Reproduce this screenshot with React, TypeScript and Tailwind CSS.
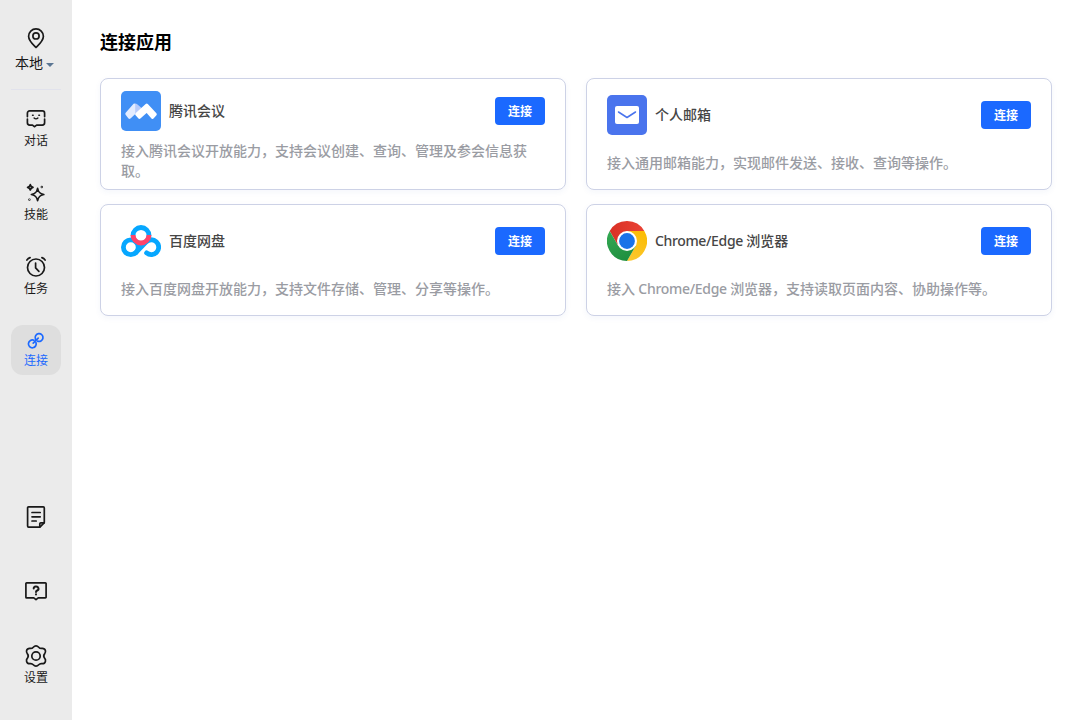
import type { ReactNode } from 'react';
import clsx from 'clsx';

interface NavItemProps {
  icon: ReactNode;
  label?: string;
  active?: boolean;
}

interface AppCardProps {
  icon: ReactNode;
  name: ReactNode;
  description: ReactNode;
  compact?: boolean;
}

const stroke = {
  fill: 'none',
  stroke: 'currentColor',
  strokeWidth: 1.7,
  strokeLinecap: 'round',
  strokeLinejoin: 'round',
} as const;

const PinIcon = () => (
  <svg width="24" height="24" viewBox="0 0 24 24" {...stroke}>
    <path d="M12 21.500C9.200 18.800 4.600 15 4.600 10.300a7.400 7.400 0 0 1 14.800 0c0 4.700-4.600 8.500-7.400 11.200Z" />
    <circle cx="12" cy="9.900" r="3.100" />
  </svg>
);

const ChatIcon = () => (
  <svg width="24" height="24" viewBox="0 0 24 24" {...stroke}>
    <path d="M3.400 9.600V6.200a2.300 2.300 0 0 1 2.300-2.300h12.600a2.300 2.300 0 0 1 2.300 2.300v3.400M3.400 12v3.800a2.300 2.300 0 0 0 2.300 2.300h2.800l1.900 1.600 2.200-1.600h5.700a2.300 2.300 0 0 0 2.300-2.300V12" />
    <path d="M8.500 8.300h.7M14.800 8.300h.7M10.100 11c1.100 1.200 2.700 1.200 3.800 0" strokeWidth="1.400" />
  </svg>
);

const SkillIcon = () => (
  <svg width="24" height="24" viewBox="0 0 24 24" {...stroke}>
    <path d="M13.600 7.300c.8 4 2.200 5.400 6.200 6.200-4 .8-5.400 2.200-6.200 6.200-.8-4-2.200-5.400-6.200-6.200 4-.8 5.400-2.200 6.200-6.200Z" />
    <path d="M6.300 3.600c.3 1.800.9 2.400 2.700 2.700-1.800.3-2.400.9-2.700 2.700-.3-1.800-.9-2.400-2.700-2.700 1.800-.3 2.400-.9 2.700-2.700Z" />
    <circle cx="17.800" cy="6" r=".35" />
    <circle cx="5.400" cy="18.600" r=".35" />
  </svg>
);

const ClockIcon = () => (
  <svg width="24" height="24" viewBox="0 0 24 24" {...stroke}>
    <circle cx="12" cy="12.500" r="8.500" />
    <path d="M11.600 8v4.900l3.300 3.500M2.900 5c.8-1.100 1.900-1.900 3.200-2.400M21.100 5c-.8-1.100-1.900-1.900-3.200-2.400" />
  </svg>
);

const LinkIcon = () => (
  <svg width="20" height="20" viewBox="0 0 20 20" {...stroke}>
    <path d="M9.500 8.100A3.900 3.900 0 1 1 11.500 10.100M9.900 11.300A3.900 3.900 0 1 1 7.900 9.300" />
    <path d="M7.200 12.200l5-5" />
  </svg>
);

const NoteIcon = () => (
  <svg width="24" height="24" viewBox="0 0 24 24" {...stroke}>
    <path d="M4.600 1.900h14.700a1 1 0 0 1 1 1v14.700l-4.400 4.500H4.600a1 1 0 0 1-1-1V2.900a1 1 0 0 1 1-1Z" />
    <path d="M20.200 17.800h-3.400a1 1 0 0 0-1 1v3M8 7.500h8.200M8 11.800h8.200M8 16h4.200" />
  </svg>
);

const HelpIcon = () => (
  <svg width="24" height="24" viewBox="0 0 24 24" {...stroke}>
    <path d="M2.600 3.900h18.800a.7.7 0 0 1 .7.700v13.600a.7.7 0 0 1-.7.700h-7.200L12 20.700l-2.200-1.800H2.600a.7.7 0 0 1-.7-.7V4.600a.7.7 0 0 1 .7-.7Z" />
    <path d="M9.700 9.600a2.400 2.100 0 1 1 3.500 1.900c-.8.4-1.200.8-1.200 1.500M12 15.300v.1" strokeWidth="2" />
  </svg>
);

const SettingsIcon = () => (
  <svg width="24" height="24" viewBox="0 0 24 24" {...stroke}>
    <path d="M9.300 3.200C10.200 2.200 11 1.900 12 1.900s1.800.3 2.700 1.300c.9 1 1.700 1.400 3 1.200 2-.2 3.200.5 3.700 2.200.4 1.400.1 2.300-.8 3.300-1.100 1.300-1.100 2.900 0 4.200.9 1 1.200 1.900.8 3.300-.5 1.700-1.700 2.400-3.700 2.200-1.300-.2-2.100.2-3 1.200s-1.700 1.300-2.700 1.300-1.800-.3-2.700-1.300c-.9-1-1.700-1.400-3-1.200-2 .2-3.200-.5-3.700-2.200-.4-1.400-.1-2.300.8-3.300 1.100-1.300 1.100-2.900 0-4.200-.9-1-1.200-1.900-.8-3.300.5-1.700 1.700-2.400 3.700-2.200 1.300.2 2.100-.2 3-1.200Z" />
    <circle cx="12" cy="12" r="4.200" />
  </svg>
);

const MeetingLogo = () => (
  <svg width="40" height="40" viewBox="0 0 40 40" strokeWidth="3" strokeLinejoin="round">
    <rect width="40" height="40" rx="5" fill="#408ff5" />
    <path d="M13.500 14L5.800 22.800 8.500 26.400 17 18.500Z" fill="#e3ecff" stroke="#e3ecff" />
    <path d="M14.200 12.400c.8 0 1.500.3 2 .8l5 4.300-7 7Z" fill="#b7cbfb" />
    <path d="M25.700 14L15.800 23.200 18.400 26.400 25.700 19.800 31.600 26.400 34.300 23.200Z" fill="#fff" stroke="#fff" />
  </svg>
);

const MailLogo = () => (
  <svg width="40" height="40" viewBox="0 0 40 40">
    <rect width="40" height="40" rx="5" fill="#4a74ed" />
    <rect x="8" y="11" width="24" height="18" rx="2" fill="#fff" />
    <path d="M11.500 17l8.500 5.500 8.500-5.500" fill="none" stroke="#4a74ed" strokeWidth="1.500" strokeLinecap="round" strokeLinejoin="round" />
  </svg>
);

const NetdiskLogo = () => (
  <svg width="40" height="40" viewBox="0 0 40 40" fill="none" strokeWidth="4.800">
    <circle cx="20" cy="14.500" r="8" stroke="#06a7ff" />
    <circle cx="9.800" cy="26.200" r="7.400" stroke="#06a7ff" />
    <path d="M14.800 31.600L25 21a7.400 7.400 0 1 1 .6 10.900" stroke="#06a7ff" strokeLinecap="round" />
    <path d="M12 14a8 8 0 1 0 16 0" stroke="#ff436a" />
  </svg>
);

const ChromeLogo = () => (
  <svg width="40" height="40" viewBox="0 0 48 48">
    <defs>
      <linearGradient id="red" x1="3.200" y1="15" x2="44.800" y2="15" gradientUnits="userSpaceOnUse">
        <stop stopColor="#d93025" />
        <stop offset="1" stopColor="#ea4335" />
      </linearGradient>
      <linearGradient id="yellow" x1="20.700" y1="47.700" x2="41.500" y2="11.600" gradientUnits="userSpaceOnUse">
        <stop stopColor="#fcc934" />
        <stop offset="1" stopColor="#fbbc04" />
      </linearGradient>
      <linearGradient id="green" x1="26.600" y1="46.500" x2="5.800" y2="10.400" gradientUnits="userSpaceOnUse">
        <stop stopColor="#1e8e3e" />
        <stop offset="1" stopColor="#34a853" />
      </linearGradient>
    </defs>
    <path d="M3.215 12A24 24 0 0 1 44.785 12H24L13.608 30Z" fill="url(#red)" />
    <path d="M44.785 12A24 24 0 0 1 24 48L34.392 30 24 12Z" fill="url(#yellow)" />
    <path d="M24 48A24 24 0 0 1 3.215 12L13.608 30H34.392Z" fill="url(#green)" />
    <circle cx="24" cy="24" r="12" fill="#fff" />
    <circle cx="24" cy="24" r="9.500" fill="#1a73e8" />
  </svg>
);

const NavItem = ({ icon, label, active }: NavItemProps) => (
  <button
    className={clsx(
      'flex h-[50px] w-[50px] flex-col items-center gap-0.5 rounded-xl text-xs leading-4',
      active ? 'bg-[#dedede] pt-1.5 text-[#1b69ff]' : 'pt-1 text-[#191919]',
    )}
  >
    {icon}
    {label && <span>{label}</span>}
  </button>
);

const AppCard = ({ icon, name, description, compact }: AppCardProps) => (
  <section
    className={clsx(
      'flex h-28 flex-col rounded-lg border border-[#cdd2e6] bg-white px-5 shadow-[0_2px_6px_rgba(30,80,180,0.05)]',
      compact ? 'gap-2.5 pt-3' : 'gap-[18px] pt-4',
    )}
  >
    <div className="flex h-10 shrink-0 items-center">
      {icon}
      <h2 className="ml-2 flex-1 text-sm leading-5 font-medium text-[#464646]">{name}</h2>
      <button className="h-7 w-[50px] rounded bg-[#1b69ff] pt-0.5 text-xs font-bold text-white">连接</button>
    </div>
    <p className="text-sm leading-5 font-medium text-[#9a9ca3]">{description}</p>
  </section>
);

const App = () => (
  <div className="flex h-screen bg-white font-['Noto_Sans','Noto_Sans_CJK_SC',sans-serif]">
    <aside className="flex w-[72px] shrink-0 flex-col items-center bg-[#ebebeb]">
      <button className="mt-[26px] flex flex-col items-center text-sm leading-5 text-[#191919]">
        <PinIcon />
        <span className="mt-[3px] mr-[3px] flex items-center gap-[3px]">
          本地
          <svg className="mt-1" width="8" height="4" viewBox="0 0 8 4">
            <path d="M0 0h8L4 4Z" fill="#5b7693" />
          </svg>
        </span>
      </button>
      <div className="mt-4 h-px w-[50px] bg-[#e1e2ec]" />
      <nav className="mt-[13px] flex flex-col gap-6">
        <NavItem icon={<ChatIcon />} label="对话" />
        <NavItem icon={<SkillIcon />} label="技能" />
        <NavItem icon={<ClockIcon />} label="任务" />
        <NavItem icon={<LinkIcon />} label="连接" active />
      </nav>
      <div className="mt-auto mb-[30px] flex flex-col">
        <div className="mb-6">
          <NavItem icon={<NoteIcon />} />
        </div>
        <div className="mb-[15px]">
          <NavItem icon={<HelpIcon />} />
        </div>
        <NavItem icon={<SettingsIcon />} label="设置" />
      </div>
    </aside>

    <main className="flex-1 px-7 pt-[30px]">
      <h1 className="text-lg leading-6 font-bold text-black">连接应用</h1>
      <div className="mt-6 grid grid-cols-2 gap-x-5 gap-y-3.5">
        <AppCard
          icon={<MeetingLogo />}
          name="腾讯会议"
          description="接入腾讯会议开放能力，支持会议创建、查询、管理及参会信息获取。"
          compact
        />
        <AppCard
          icon={<MailLogo />}
          name="个人邮箱"
          description="接入通用邮箱能力，实现邮件发送、接收、查询等操作。"
        />
        <AppCard
          icon={<NetdiskLogo />}
          name="百度网盘"
          description="接入百度网盘开放能力，支持文件存储、管理、分享等操作。"
        />
        <AppCard
          icon={<ChromeLogo />}
          name={<><span className="tracking-[-0.35px]">Chrome/Edge </span>浏览器</>}
          description={<>接入<span className="tracking-[-0.3px]"> Chrome/Edge </span>浏览器，支持读取页面内容、协助操作等。</>}
        />
      </div>
    </main>
  </div>
);

export default App;
